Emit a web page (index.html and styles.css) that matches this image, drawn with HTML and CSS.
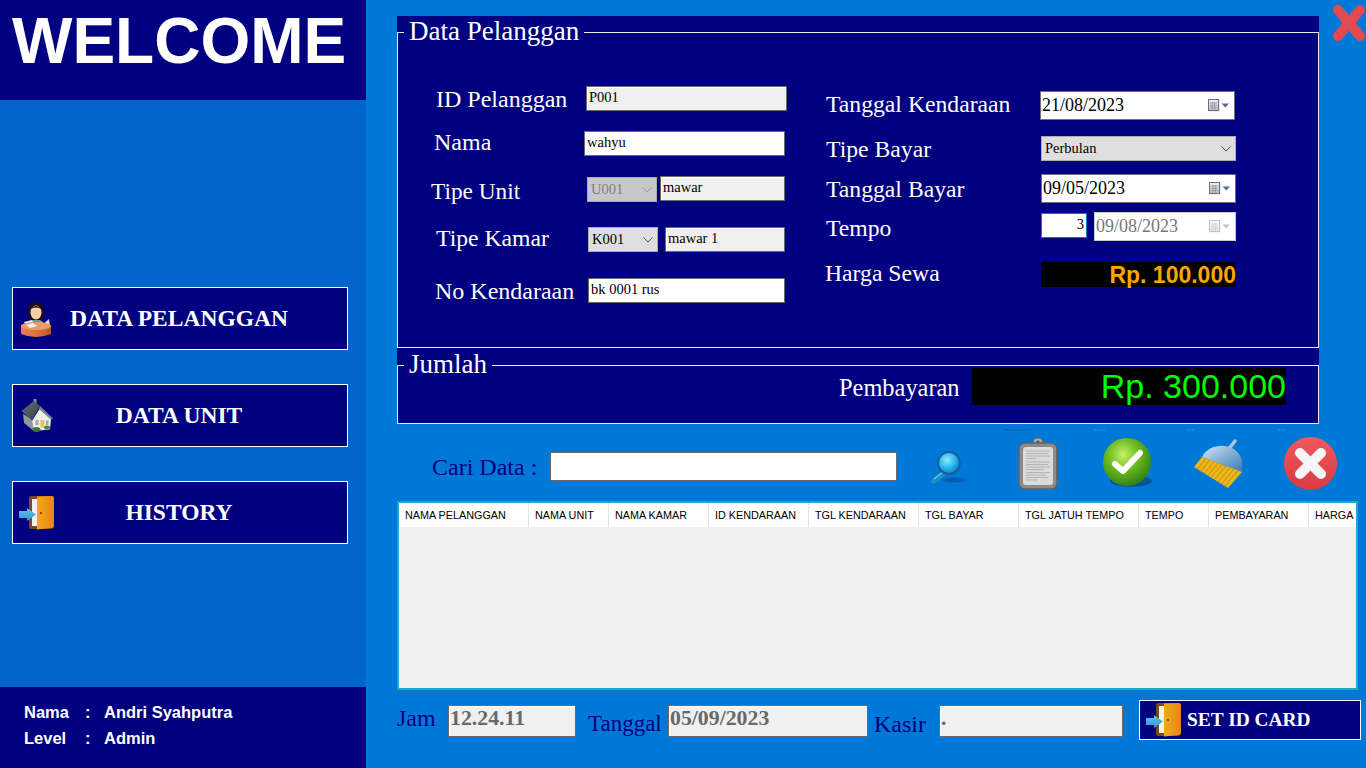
FILE: index.html
```html
<!DOCTYPE html>
<html lang="id">
<head>
  <meta charset="UTF-8">
  <title>Data Pelanggan</title>
  <link rel="stylesheet" href="styles.css">
</head>
<body>
  <svg class="defs" width="0" height="0">
    <defs>
      <linearGradient id="doorGrad" x1="0" x2="1" y1="0" y2="0">
        <stop offset="0" stop-color="#f5a81c"/><stop offset="1" stop-color="#e08a12"/>
      </linearGradient>
      <linearGradient id="arrowGrad" x1="0" x2="0" y1="0" y2="1">
        <stop offset="0" stop-color="#5fc0ee"/><stop offset="1" stop-color="#2f9ad6"/>
      </linearGradient>
      <linearGradient id="calGrad" x1="0" x2="0" y1="0" y2="1">
        <stop offset="0" stop-color="#f0f0f0"/><stop offset="1" stop-color="#b8bcc6"/>
      </linearGradient>
      <symbol id="iconDoor" viewBox="0 0 36 36">
        <rect x="11" y="1" width="24" height="33" rx="2" fill="#7a4a1c"/>
        <rect x="14" y="4" width="6" height="27" fill="#f4f1ea"/>
        <path d="M19 1.500 L34 1 Q36 1 36 3 L36 31 Q36 33 34 33 L19 34.500 Z" fill="url(#doorGrad)"/>
        <circle cx="23" cy="18" r="1" fill="#5a3208"/>
        <path d="M1 16 L9 16 L9 13 L18 19.500 L9 26 L9 23 L1 23 Z" fill="url(#arrowGrad)"/>
      </symbol>
      <symbol id="iconCal" viewBox="0 0 24 16">
        <rect x="3.500" y="2.500" width="10" height="11" fill="#b9b9b9" opacity=".5"/>
        <rect x="2.500" y="1.500" width="10" height="11" fill="url(#calGrad)" stroke="#6f6f78"/>
        <path d="M4 5h7M4 7.300h7M4 9.600h7M6 4v7.500M8.500 4v7.500" stroke="#8f95a8" stroke-width=".8" fill="none"/>
        <path d="M15.500 5.500 L23 5.500 L19.250 9.500 Z" fill="#566a8c"/>
      </symbol>
      <symbol id="iconChevron" viewBox="0 0 10 6">
        <path d="M.5 .5 L5 5 L9.500 .5" fill="none" stroke="#555" stroke-width="1"/>
      </symbol>
    </defs>
  </svg>

  <div class="app">
    <aside class="sidebar">
      <div class="welcome">WELCOME</div>
      <nav class="side-nav">
        <a class="side-btn" href="#">
          <svg class="side-icon" width="36" height="36" viewBox="0 0 36 36">
            <defs>
              <linearGradient id="deskGrad" x1="0" x2="1" y1="0" y2="0">
                <stop offset="0" stop-color="#e8824a"/><stop offset=".6" stop-color="#d96f38"/><stop offset="1" stop-color="#b9572a"/>
              </linearGradient>
            </defs>
            <path d="M10 23 Q18 13 27 23 L27 28 L10 28 Z" fill="#6f9d8e"/>
            <path d="M10.500 12 Q10 1 18 1 Q26 1 25.500 12 Q26 17 23 19 L13 19 Q10 17 10.500 12 Z" fill="#1d0f0a"/>
            <ellipse cx="18" cy="11.500" rx="5.500" ry="7" fill="#f5cfa8"/>
            <path d="M12 8 Q18 2 24 8 Q18 5 12 8 Z" fill="#1d0f0a"/>
            <path d="M6 21 L14 19 L17 26 L9 28 Z" fill="#eef1f2"/>
            <path d="M23 25 L31 18 L32 25 L26 28 Z" fill="#d8dde0"/>
            <path d="M3 25 Q18 19 33 25 L33 33 Q18 39 3 33 Z" fill="url(#deskGrad)"/>
            <ellipse cx="18" cy="25" rx="15" ry="4" fill="#ef9a68"/>
            <path d="M8 24 L15 22 L19 25 L12 27 Z" fill="#f7f7f5"/>
          </svg>
          <span class="side-text">DATA PELANGGAN</span>
        </a>
        <a class="side-btn" href="#">
          <svg class="side-icon" width="36" height="36" viewBox="0 0 36 36">
            <defs>
              <linearGradient id="roofGrad" x1="0" x2="1" y1="0" y2="1">
                <stop offset="0" stop-color="#66727c"/><stop offset="1" stop-color="#333c44"/>
              </linearGradient>
            </defs>
            <rect x="15.500" y="1" width="3" height="6" fill="#8a8f94"/>
            <path d="M5 16 L14 21 L16 33 L6 25 Z" fill="#8f979c"/>
            <path d="M14 23 L21.500 11 L33 21 L32 31.500 L16 33 Z" fill="#eceee9"/>
            <path d="M3.500 13 L16 3 L22 8 L14 22.500 Z" fill="url(#roofGrad)"/>
            <path d="M22 8 L35 20.500 L33 21.500 L21 11 Z" fill="#7c8791"/>
            <rect x="22.500" y="22" width="4" height="7.500" fill="#e5c272"/>
            <rect x="17.500" y="22" width="3" height="5" fill="#9bacb5"/>
            <rect x="28" y="22.500" width="2.500" height="4.500" fill="#9bacb5"/>
            <ellipse cx="18.500" cy="31.500" rx="4" ry="2.500" fill="#3b7a2f"/>
            <ellipse cx="29" cy="29.500" rx="3" ry="2" fill="#4b8a37"/>
          </svg>
          <span class="side-text">DATA UNIT</span>
        </a>
        <a class="side-btn" href="#">
          <svg class="side-icon" width="36" height="36"><use href="#iconDoor"/></svg>
          <span class="side-text">HISTORY</span>
        </a>
      </nav>
      <div class="side-user">
        <span>Nama</span><span>:</span><span>Andri Syahputra</span>
        <span>Level</span><span>:</span><span>Admin</span>
      </div>
    </aside>

    <main class="content">
      <section class="panel panel-data">
        <fieldset class="group">
          <legend class="group-title group-title-data">Data Pelanggan</legend>
          <div class="form-cols">
            <div class="form-col-left">
              <div class="row row-id">
                <label class="lbl">ID Pelanggan</label>
                <div class="field field-ro w-id">P001</div>
              </div>
              <div class="row row-nama">
                <label class="lbl">Nama</label>
                <div class="field w-id">wahyu</div>
              </div>
              <div class="row row-unit">
                <label class="lbl">Tipe Unit</label>
                <div class="combo combo-off">U001 <svg class="chev" width="10" height="6"><use href="#iconChevron"/></svg></div>
                <div class="field field-ro w-unit">mawar</div>
              </div>
              <div class="row row-kamar">
                <label class="lbl">Tipe Kamar</label>
                <div class="combo">K001 <svg class="chev" width="10" height="6"><use href="#iconChevron"/></svg></div>
                <div class="field field-ro w-kamar">mawar 1</div>
              </div>
              <div class="row row-kendaraan">
                <label class="lbl">No Kendaraan</label>
                <div class="field w-kendaraan">bk 0001 rus</div>
              </div>
            </div>
            <div class="form-col-right">
              <div class="row rb-kend">
                <label class="lbl">Tanggal Kendaraan</label>
                <div class="date">21/08/2023 <svg class="cal" width="24" height="16"><use href="#iconCal"/></svg></div>
              </div>
              <div class="row rb-tipe">
                <label class="lbl">Tipe Bayar</label>
                <div class="combo combo-wide">Perbulan <svg class="chev" width="10" height="6"><use href="#iconChevron"/></svg></div>
              </div>
              <div class="row rb-bayar">
                <label class="lbl">Tanggal Bayar</label>
                <div class="date">09/05/2023 <svg class="cal" width="24" height="16"><use href="#iconCal"/></svg></div>
              </div>
              <div class="row rb-tempo">
                <label class="lbl">Tempo</label>
                <div class="spinner">3</div>
                <div class="date date-off">09/08/2023 <svg class="cal" width="24" height="16"><use href="#iconCal"/></svg></div>
              </div>
              <div class="row rb-harga">
                <label class="lbl">Harga Sewa</label>
                <div class="harga">Rp. 100.000</div>
              </div>
            </div>
          </div>
        </fieldset>
      </section>

      <section class="panel panel-jumlah">
        <fieldset class="group">
          <legend class="group-title group-title-jumlah">Jumlah</legend>
          <div class="row row-bayar">
            <label class="lbl">Pembayaran</label>
            <div class="total">Rp. 300.000</div>
          </div>
        </fieldset>
      </section>

      <div class="toolbar">
        <label class="lbl lbl-cari">Cari Data :</label>
        <div class="search-box"></div>
        <svg class="tool tool-search" width="36" height="37" viewBox="0 0 36 37">
          <defs>
            <radialGradient id="lensGrad" cx=".4" cy=".35" r=".7">
              <stop offset="0" stop-color="#8fe9ff"/><stop offset=".6" stop-color="#24b6ee"/><stop offset="1" stop-color="#0c7fc4"/>
            </radialGradient>
          </defs>
          <ellipse cx="24" cy="30" rx="12" ry="2.500" fill="#0a4f96" opacity=".7"/>
          <path d="M12 21 L2 29 Q0 32 2 33.500 Q4 34 6 33 L16 25 Z" fill="#1a8ec8"/>
          <path d="M4 29 L13 22" stroke="#63c4ee" stroke-width="1.500"/>
          <circle cx="19" cy="13" r="12" fill="#1b5f94"/>
          <circle cx="19" cy="13" r="10" fill="url(#lensGrad)"/>
        </svg>
        <svg class="tool tool-clip" width="40" height="53" viewBox="0 0 40 53">
          <path class="speck-dark" d="M-13 -7h26"/>
          <path d="M15 6 Q15 1 20 1 Q25 1 25 6 L28 7 L28 11 L12 11 L12 7 Z" fill="#a9a9a9" stroke="#666" stroke-width="1"/>
          <circle cx="20" cy="5" r="1.500" fill="#444"/>
          <rect x="1" y="6" width="38" height="46" rx="6" fill="#8b8b8b" stroke="#5f6468" stroke-width="1.500"/>
          <rect x="5" y="10" width="30" height="38" rx="3" fill="#dadada"/>
          <path d="M8 14h24M8 16.500h22M8 19h24M8 21.500h10M8 25h24M8 27.500h22M8 30h24M8 32.500h18M8 35.500h24M8 38h20M8 40.500h22M8 43h12" stroke="#a2a2a2" stroke-width=".7" fill="none"/>
        </svg>
        <svg class="tool tool-check" width="50" height="51" viewBox="0 0 50 51">
          <defs>
            <radialGradient id="ballGrad" cx=".42" cy=".35" r=".7">
              <stop offset="0" stop-color="#c8f06a"/><stop offset=".45" stop-color="#6ebd20"/><stop offset="1" stop-color="#2c7a10"/>
            </radialGradient>
          </defs>
          <path class="speck" d="M-9 -7h11"/>
          <ellipse cx="28" cy="44" rx="21" ry="6" fill="#0d4a86" opacity=".75"/>
          <circle cx="24" cy="25" r="24" fill="url(#ballGrad)"/>
          <path d="M12 27 L20 34 L37 16" fill="none" stroke="#fff" stroke-width="6" stroke-linecap="round" stroke-linejoin="round"/>
        </svg>
        <svg class="tool tool-broom" width="50" height="50" viewBox="0 0 50 50">
          <defs>
            <linearGradient id="broomGrad" x1="0" x2="1" y1="0" y2="1">
              <stop offset="0" stop-color="#d0e4f4"/><stop offset="1" stop-color="#3a7cb4"/>
            </linearGradient>
          </defs>
          <path class="speck" d="M-6 -10h8"/>
          <path d="M35 10 L42 1" stroke="#a7c9e4" stroke-width="3.500" stroke-linecap="round"/>
          <path d="M9 17 Q14 7 26 6 Q34 5 41 9 Q49 15 49 22 L49 32 Z" fill="url(#broomGrad)"/>
          <path d="M9 17 L49 32 L35 48 L1 27 Z" fill="#edb61c"/>
          <path d="M13 18.500 L4.500 29M17 20 L8 31M21 21.500 L11.500 33M25 23 L15 35.500M29 24.500 L18 37.500M33 26 L21.500 39.500M37 27.500 L25 42M41 29 L28.500 44M45 30.500 L32 46" stroke="#b98a0a" stroke-width=".9"/>
        </svg>
        <svg class="tool tool-cancel" width="53" height="53" viewBox="0 0 53 53">
          <defs>
            <linearGradient id="redGrad" x1="0" x2="0" y1="0" y2="1">
              <stop offset="0" stop-color="#ef5a60"/><stop offset="1" stop-color="#d93a40"/>
            </linearGradient>
          </defs>
          <path class="speck" d="M-6 -7h7"/>
          <circle cx="26.500" cy="26.500" r="26.500" fill="url(#redGrad)"/>
          <path d="M16 16 L37 37 M37 16 L16 37" stroke="#f6f6f6" stroke-width="10" stroke-linecap="round"/>
        </svg>
      </div>

      <div class="table-wrap">
        <table class="grid">
          <colgroup>
            <col class="c-130"><col class="c-80"><col class="c-100"><col class="c-100"><col class="c-110">
            <col class="c-100"><col class="c-120"><col class="c-70"><col class="c-100"><col class="c-50">
          </colgroup>
          <thead>
            <tr>
              <th>NAMA PELANGGAN</th><th>NAMA UNIT</th><th>NAMA KAMAR</th><th>ID KENDARAAN</th><th>TGL KENDARAAN</th>
              <th>TGL BAYAR</th><th>TGL JATUH TEMPO</th><th>TEMPO</th><th>PEMBAYARAN</th><th>HARGA</th>
            </tr>
          </thead>
        </table>
      </div>

      <div class="footer-row">
        <label class="foot-lbl foot-jam">Jam</label>
        <div class="foot-field w-jam">12.24.11</div>
        <label class="foot-lbl foot-tanggal">Tanggal</label>
        <div class="foot-field w-tanggal">05/09/2023</div>
        <label class="foot-lbl foot-kasir">Kasir</label>
        <div class="foot-field w-kasir">.</div>
        <a class="card-btn" href="#">
          <svg width="36" height="36"><use href="#iconDoor"/></svg>
          <span>SET ID CARD</span>
        </a>
      </div>
    </main>
  </div>

  <svg class="close-x" width="34" height="38" viewBox="0 0 34 38">
    <path d="M6 6 L28 32 M28 6 L6 32" stroke="#e04a50" stroke-width="10" stroke-linecap="round"/>
  </svg>
</body>
</html>
```

FILE: styles.css
```css
* {
  box-sizing: border-box;
}

body {
  margin: 0;
  background-color: #0078d7;
  font-family: "Liberation Serif", serif;
  overflow: hidden;
}

a {
  text-decoration: none;
}

.defs {
  position: absolute;
}

.app {
  display: flex;
  height: 768px;
}

/* sidebar */
.sidebar {
  width: 366px;
  display: flex;
  flex-direction: column;
  background-color: #0066cc;
}

.welcome {
  height: 100px;
  padding: 4px 0 0 12px;
  background-color: #000080;
  color: #fff;
  font-family: "Liberation Sans", sans-serif;
  font-size: 64px;
  font-weight: bold;
  line-height: 74px;
}

.side-nav {
  flex: 1;
  display: flex;
  flex-direction: column;
  gap: 34px;
  padding: 187px 18px 0 12px;
}

.side-btn {
  height: 63px;
  display: grid;
  grid-template-columns: 1fr auto 1fr;
  align-items: center;
  padding: 0 7px 0 5px;
  background-color: #000080;
  border: 1px solid #fff;
  color: #fff;
  font-size: 23.5px;
  font-weight: bold;
}

.side-icon {
  justify-self: start;
}

.side-user {
  height: 81px;
  display: grid;
  grid-template-columns: 61px 19px 1fr;
  grid-auto-rows: 26px;
  align-content: center;
  padding: 0 0 6px 24px;
  background-color: #000080;
  color: #fff;
  font-family: "Liberation Sans", sans-serif;
  font-size: 16.5px;
  font-weight: bold;
  line-height: 26px;
}

/* main area */
.content {
  width: 1000px;
  padding: 16px 0 0 31px;
}

.panel {
  width: 922px;
  background-color: #000080;
}

.panel-data {
  height: 332px;
}

.panel-jumlah {
  height: 76px;
}

.group {
  height: 100%;
  margin: 0;
  padding: 0;
  border: 1px solid #e8e8f4;
  color: #fff;
}

.group-title {
  margin-left: 6px;
  padding: 0 5px;
  font-size: 27px;
}

.group-title-data {
  height: 32px;
  line-height: 31px;
}

.group-title-jumlah {
  height: 34px;
  line-height: 32px;
}

.form-cols {
  display: flex;
}

.form-col-left {
  width: 428px;
}

.row {
  display: flex;
  align-items: center;
}

.lbl {
  flex: none;
  font-size: 24px;
}

/* left column rows */
.row-id { margin-top: 38px; height: 25px; padding-left: 38px; }
.row-id .lbl { width: 150px; margin-top: 2px; }
.row-nama { margin-top: 20px; height: 25px; padding-left: 36px; }
.row-nama .lbl { width: 150px; margin-bottom: 2px; }
.row-unit { margin-top: 20px; height: 26px; padding-left: 33px; gap: 3px; }
.row-unit .lbl { width: 153px; margin-top: 4px; font-size: 23.3px; }
.row-kamar { margin-top: 25px; height: 25px; padding-left: 38px; gap: 7px; }
.row-kamar .lbl { width: 145px; margin-bottom: 2px; font-size: 23.7px; }
.row-kendaraan { margin-top: 26px; height: 25px; padding-left: 37px; }
.row-kendaraan .lbl { width: 153px; margin-top: 2px; }

.row-unit .combo {
  align-self: flex-end;
}

.row-unit .field {
  align-self: flex-start;
}

/* right column rows */
.form-col-right .lbl {
  font-size: 23.7px;
}

.rb-kend { margin-top: 43px; height: 29px; }
.rb-kend .lbl { width: 214px; margin-bottom: 2px; }
.rb-tipe { margin-top: 16px; height: 25px; }
.rb-tipe .lbl { width: 215px; margin-top: 2px; }
.rb-bayar { margin-top: 13px; height: 29px; }
.rb-bayar .lbl { width: 215px; margin-top: 2px; }
.rb-tempo { margin-top: 9px; height: 29px; gap: 7px; }
.rb-tempo .lbl { width: 208px; margin-top: 4px; }
.rb-harga { margin-top: 21px; height: 25px; }
.rb-harga .lbl { width: 216px; margin: 0 0 2px -1px; }

.field {
  height: 25px;
  padding: 0 2px;
  background-color: #fff;
  border: 1px solid #696969;
  color: #000;
  font-size: 14.5px;
  line-height: 20px;
}

.field-ro {
  background-color: #f0f0f0;
  box-shadow: inset 1px 1px #fff;
}

.w-id { width: 201px; }
.w-unit { width: 125px; }
.w-kamar { width: 120px; }
.w-kendaraan { width: 197px; }

.combo {
  width: 70px;
  height: 25px;
  display: flex;
  align-items: center;
  justify-content: space-between;
  padding: 0 4px 0 3px;
  background-color: #dedede;
  border: 1px solid #ababab;
  color: #000;
  font-size: 14.5px;
}

.combo-off {
  background-color: #c8c8c8;
  color: #808080;
}

.combo-off .chev {
  opacity: .4;
}

.combo-wide {
  width: 195px;
}

.date {
  width: 195px;
  height: 29px;
  display: flex;
  align-items: center;
  justify-content: space-between;
  padding: 0 4px 0 1px;
  background-color: #fff;
  border: 1px solid #6f6f78;
  color: #000;
  font-size: 18px;
}

.date-off {
  width: 142px;
  color: #777;
  border-color: #ccc;
}

.date-off .cal {
  opacity: .4;
}

.spinner {
  width: 46px;
  height: 25px;
  align-self: flex-start;
  margin-top: 1px;
  padding: 0 2px;
  background-color: #fff;
  border: 1px solid #0078d7;
  color: #000;
  font-size: 14.5px;
  line-height: 20px;
  text-align: right;
}

.harga {
  width: 195px;
  height: 25px;
  background-color: #000;
  color: #ffa500;
  font-family: "Liberation Sans", sans-serif;
  font-size: 23px;
  font-weight: bold;
  line-height: 26px;
  text-align: right;
}

.row-bayar {
  margin-top: -14px;
  padding-left: 441px;
}

.row-bayar .lbl {
  width: 133px;
  margin-top: 2px;
  font-size: 24.4px;
}

.total {
  width: 314px;
  height: 37px;
  background-color: #000;
  color: #00ff00;
  font-family: "Liberation Sans", sans-serif;
  font-size: 34px;
  line-height: 37px;
  text-align: right;
}

/* search + action icons */
.toolbar {
  display: flex;
  align-items: flex-start;
  height: 53px;
  margin-top: 13px;
  padding-left: 35px;
}

.lbl-cari {
  width: 118px;
  margin-top: 17px;
  color: #000080;
}

.search-box {
  width: 347px;
  height: 29px;
  margin-top: 15px;
  background-color: #fff;
  border: 1px solid #696969;
}

.tool {
  overflow: visible;
}

.speck,
.speck-dark {
  fill: none;
  stroke-width: 1;
  stroke-dasharray: 3 1;
  opacity: .6;
}

.speck {
  stroke: #4f9ee6;
}

.speck-dark {
  stroke: #1a3f78;
}

.tool-search { margin: 13px 0 0 33px; }
.tool-clip { margin-left: 52px; }
.tool-check { margin-left: 45px; }
.tool-broom { margin: 3px 0 0 40px; }
.tool-cancel { margin-left: 41px; }

/* table */
.table-wrap {
  width: 961px;
  height: 189px;
  margin-top: 11px;
  background-color: #f0f0f0;
  border: 2px solid #17b0b8;
  outline: 1px solid #5f8f9f;
  outline-offset: -1px;
  overflow: hidden;
}

.grid {
  width: 957px;
  table-layout: fixed;
  border-collapse: separate;
  border-spacing: 0;
  font-family: "Liberation Sans", sans-serif;
  font-size: 10.8px;
}

.c-130 { width: 130px; }
.c-120 { width: 120px; }
.c-110 { width: 110px; }
.c-100 { width: 100px; }
.c-80 { width: 80px; }
.c-70 { width: 70px; }
.c-50 { width: 47px; }

.grid th {
  height: 24px;
  padding: 0 0 0 6px;
  background-color: #fff;
  border-right: 1px solid #e4e4e4;
  color: #000;
  font-weight: normal;
  text-align: left;
  white-space: nowrap;
  overflow: hidden;
}

.grid th:last-child {
  border-right: 0;
}

/* bottom row */
.footer-row {
  display: flex;
  align-items: center;
  height: 40px;
  margin-top: 10px;
  color: #000080;
}

.foot-lbl {
  font-size: 24px;
}

.foot-jam { width: 51px; margin-bottom: 4px; }
.foot-tanggal { width: 80px; margin: 8px 0 0 12px; font-size: 23px; }
.foot-kasir { width: 65px; margin: 8px 0 0 6px; }

.foot-field {
  height: 32px;
  margin-top: 2px;
  padding: 0 1px;
  background-color: #f0f0f0;
  border: 1px solid #696969;
  box-shadow: inset 1px 1px #fff;
  color: #696969;
  font-size: 21.8px;
  font-weight: bold;
  line-height: 25px;
}

.w-jam { width: 128px; }
.w-tanggal { width: 200px; }
.w-kasir { width: 184px; }

.card-btn {
  width: 222px;
  height: 40px;
  display: flex;
  align-items: center;
  gap: 6px;
  margin-left: 16px;
  padding-left: 5px;
  background-color: #000080;
  border: 1px solid #fff;
  color: #fff;
  font-size: 19.4px;
  font-weight: bold;
}

.close-x {
  position: absolute;
  top: 4px;
  left: 1332px;
}
```
